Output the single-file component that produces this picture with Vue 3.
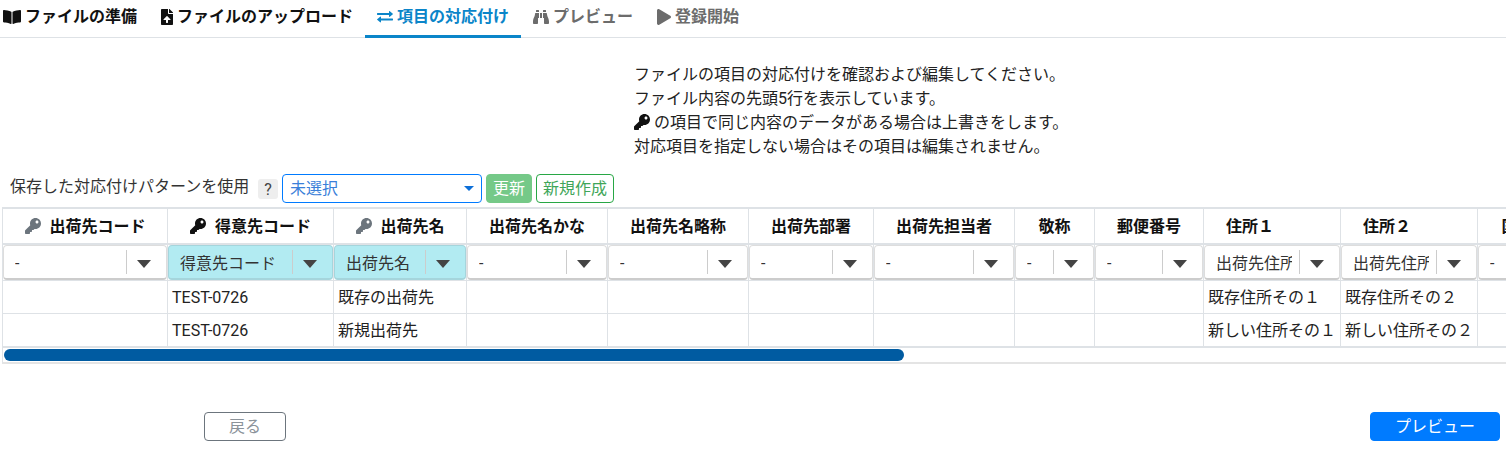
<script setup>
const keyPath = "M512 176.001C512 273.203 433.202 352 336 352c-11.22 0-22.19-1.062-32.827-3.069l-24.012 27.014A23.999 23.999 0 0 1 261.223 384H224v40c0 13.255-10.745 24-24 24h-40v40c0 13.255-10.745 24-24 24H24c-13.255 0-24-10.745-24-24v-78.059c0-6.365 2.529-12.47 7.029-16.971l161.802-161.802C163.108 213.814 160 195.271 160 176 160 78.798 238.797.001 335.999 0 433.488-.001 512 78.511 512 176.001zM336 128c0 26.51 21.49 48 48 48s48-21.49 48-48-21.49-48-48-48-48 21.49-48 48z";

const tabs = [
  { label: "ファイルの準備", w: 576, h: 512, cls: "done", path: "M542.22 32.05c-54.8 3.11-163.72 14.43-230.96 55.59-4.64 2.84-7.27 7.89-7.27 13.17v363.87c0 11.55 12.63 18.85 23.28 13.49 69.18-34.82 169.23-44.32 218.7-46.92 16.89-.89 30.02-14.43 30.02-30.66V62.75c.01-17.71-15.35-31.74-33.77-30.7zM264.73 87.64C197.5 46.48 88.58 35.17 33.78 32.05 15.36 31.01 0 45.04 0 62.75V400.6c0 16.24 13.13 29.78 30.02 30.66 49.49 2.6 149.59 12.11 218.77 46.95 10.62 5.35 23.21-1.94 23.21-13.46V100.63c0-5.29-2.62-10.14-7.27-12.99z" },
  { label: "ファイルのアップロード", w: 384, h: 512, cls: "done", path: "M224 136V0H24C10.7 0 0 10.7 0 24v464c0 13.3 10.7 24 24 24h336c13.3 0 24-10.7 24-24V160H248c-13.2 0-24-10.8-24-24zm65.18 216.01H224v80c0 8.84-7.16 16-16 16h-32c-8.84 0-16-7.16-16-16v-80H94.82c-14.28 0-21.41-17.29-11.27-27.36l96.42-95.7c6.65-6.61 17.39-6.61 24.04 0l96.42 95.7c10.15 10.07 3.03 27.36-11.25 27.36zM377 105L279.1 7c-4.5-4.5-10.6-7-17-7H256v128h128v-6.1c0-6.3-2.5-12.4-7-16.9z" },
  { label: "項目の対応付け", w: 512, h: 512, cls: "active", path: "M0 176v-32c0-9 7-16 16-16h368V80c0-14 17-21 27-11l96 80c6 6 6 16 0 22l-96 80c-10 10-27 3-27-11v-48H16c-9 0-16-7-16-16zM496 304H128v-48c0-14-17-21-27-11L5 325c-6 6-6 16 0 22l96 80c10 10 27 3 27-11v-48h368c9 0 16-7 16-16v-32c0-9-7-16-16-16z" },
  { label: "プレビュー", w: 512, h: 512, cls: "todo", path: "M416 48c0-8.84-7.16-16-16-16h-64c-8.84 0-16 7.16-16 16v48h96V48zM63.91 159.99C61.4 253.84 3.46 274.22 0 404v44c0 17.67 14.33 32 32 32h96c17.67 0 32-14.33 32-32V288h32V128H95.84c-17.63 0-31.45 14.37-31.93 31.99zm384.18 0c-.48-17.62-14.3-31.99-31.93-31.99H320v160h32v160c0 17.67 14.33 32 32 32h96c17.67 0 32-14.33 32-32v-44c-3.46-129.78-61.4-150.16-63.91-244.01zM176 32h-64c-8.84 0-16 7.16-16 16v48h96V48c0-8.84-7.16-16-16-16zm48 256h64V128h-64v160z" },
  { label: "登録開始", w: 448, h: 512, cls: "todo", path: "M424.4 214.7L72.4 6.6C43.8-10.3 0 6.1 0 47.9V464c0 37.5 40.7 60.1 72.4 41.3l352-208c31.4-18.5 31.5-64.1 0-82.6z" },
];

const notes = [
  "ファイルの項目の対応付けを確認および編集してください。",
  "ファイル内容の先頭5行を表示しています。",
  null,
  "対応項目を指定しない場合はその項目は編集されません。",
];

const columns = [
  { title: "出荷先コード", width: 165, key: "off", value: "-", rows: ["", ""] },
  { title: "得意先コード", width: 166, key: "on", value: "得意先コード", mapped: true, rows: ["TEST-0726", "TEST-0726"] },
  { title: "出荷先名", width: 133, key: "off", value: "出荷先名", mapped: true, rows: ["既存の出荷先", "新規出荷先"] },
  { title: "出荷先名かな", width: 141, value: "-", rows: ["", ""] },
  { title: "出荷先名略称", width: 141, value: "-", rows: ["", ""] },
  { title: "出荷先部署", width: 125, value: "-", rows: ["", ""] },
  { title: "出荷先担当者", width: 141, value: "-", rows: ["", ""] },
  { title: "敬称", width: 80, value: "-", rows: ["", ""] },
  { title: "郵便番号", width: 109, value: "-", rows: ["", ""] },
  { title: "住所１", width: 137, shifted: true, value: "出荷先住所１", rows: ["既存住所その１", "新しい住所その１"] },
  { title: "住所２", width: 137, shifted: true, value: "出荷先住所２", rows: ["既存住所その２", "新しい住所その２"] },
  { title: "国コード", width: 112, value: "-", rows: ["", ""] },
];
</script>

<template>
  <div class="page">
    <nav class="tabs">
      <a v-for="tab in tabs" :key="tab.label" class="tab" :class="tab.cls">
        <svg class="tab-icon" :viewBox="`0 0 ${tab.w} ${tab.h}`" :style="{ width: (tab.w / tab.h) * 16 + 'px' }">
          <path :d="tab.path" fill="currentColor" />
        </svg>
        <span>{{ tab.label }}</span>
      </a>
    </nav>

    <div class="notes">
      <template v-for="(note, i) in notes" :key="i">
        <p v-if="note">{{ note }}</p>
        <p v-else>
          <svg class="note-key" viewBox="0 0 512 512"><path :d="keyPath" fill="#111" /></svg>
          の項目で同じ内容のデータがある場合は上書きをします。
        </p>
      </template>
    </div>

    <div class="pattern">
      <span class="pattern-label">保存した対応付けパターンを使用</span>
      <span class="help">?</span>
      <div class="pattern-select">
        <span>未選択</span>
        <i class="caret-blue"></i>
      </div>
      <button class="btn-update">更新</button>
      <button class="btn-new">新規作成</button>
    </div>

    <div class="table-wrap">
      <table class="map-table">
        <colgroup>
          <col v-for="col in columns" :key="col.title" :style="{ width: col.width + 'px' }" />
        </colgroup>
        <thead>
          <tr class="head-row">
            <th v-for="col in columns" :key="col.title" :class="{ shifted: col.shifted }">
              <svg v-if="col.key" class="head-key" :class="col.key" viewBox="0 0 512 512">
                <path :d="keyPath" fill="currentColor" />
              </svg>
              {{ col.title }}
            </th>
          </tr>
          <tr class="select-row">
            <td v-for="col in columns" :key="col.title">
              <div class="col-select" :class="{ mapped: col.mapped }">
                <span class="col-value">{{ col.value }}</span>
                <span class="col-arrow"><i></i></span>
              </div>
            </td>
          </tr>
        </thead>
        <tbody>
          <tr v-for="n in 2" :key="n" class="data-row">
            <td v-for="col in columns" :key="col.title">{{ col.rows[n - 1] }}</td>
          </tr>
        </tbody>
      </table>
      <div class="scrollbar"><div class="thumb"></div></div>
    </div>

    <div class="footer">
      <button class="btn-back">戻る</button>
      <button class="btn-preview">プレビュー</button>
    </div>
  </div>
</template>

<style scoped>
.page {
  width: 1506px;
  height: 474px;
  overflow: hidden;
  background: #fff;
  color: #212529;
  font-family: Roboto, "Noto Sans CJK JP", sans-serif;
  font-size: 16px;
}
.tabs {
  display: flex;
  height: 38px;
  margin-left: -9px;
  border-bottom: 1px solid #dee2e6;
  box-sizing: border-box;
}
.tab {
  display: flex;
  align-items: center;
  gap: 4px;
  height: 38px;
  padding: 0 12px 4px;
  box-sizing: border-box;
  font-weight: 700;
  line-height: 24px;
}
.tab-icon {
  height: 16px;
  flex: none;
}
.tab.done {
  color: #111;
}
.tab.active {
  color: #0a85c9;
  border-bottom: 3px solid #0a85c9;
  padding-bottom: 1px;
}
.tab.todo {
  color: #6c6c6c;
}
.notes {
  margin: 25px 0 0 634px;
  line-height: 24px;
  color: #222;
}
.notes p {
  margin: 0;
  white-space: nowrap;
}
.note-key {
  width: 16px;
  height: 16px;
  vertical-align: -2px;
}
.pattern {
  display: flex;
  align-items: center;
  height: 29px;
  margin-top: 15px;
  padding-left: 10px;
}
.pattern-label {
  width: 248px;
  line-height: 24px;
  margin-top: -3px;
  color: #333;
  white-space: nowrap;
}
.help {
  width: 20px;
  height: 20px;
  margin-top: 1px;
  background: #eee;
  border-radius: 3px;
  text-align: center;
  line-height: 21px;
  font-size: 16px;
  color: #444;
}
.pattern-select {
  display: flex;
  align-items: center;
  justify-content: space-between;
  width: 200px;
  height: 29px;
  margin-left: 4px;
  padding: 0 7px;
  box-sizing: border-box;
  border: 1px solid #007bff;
  border-radius: 4px;
  color: #3a7fd9;
  line-height: 24px;
}
.caret-blue {
  width: 0;
  height: 0;
  border-left: 5px solid transparent;
  border-right: 5px solid transparent;
  border-top: 5px solid #0d6fd8;
}
.btn-update,
.btn-new {
  height: 29px;
  margin-left: 4px;
  padding: 0;
  border-radius: 4px;
  font: inherit;
  line-height: 24px;
}
.btn-update {
  width: 46px;
  border: 1px solid #75c988;
  background: #75c988;
  color: #fff;
}
.btn-new {
  width: 78px;
  border: 1px solid #28a745;
  background: #fff;
  color: #3fa659;
}
.table-wrap {
  margin: 4px 0 0 2px;
  width: 1504px;
  overflow: hidden;
}
.map-table {
  table-layout: fixed;
  width: 1587px;
  border-collapse: separate;
  border-spacing: 0;
  border-top: 2px solid #dee2e6;
  border-left: 1px solid #dee2e6;
}
.head-row th {
  height: 33px;
  padding: 1px 0 0;
  border-right: 1px solid #dee2e6;
  border-bottom: 2px solid #dee2e6;
  line-height: 20px;
  font-weight: 700;
  color: #111;
  white-space: nowrap;
  overflow: hidden;
}
.head-row th.shifted {
  padding-right: 44px;
}
.head-key {
  width: 16px;
  height: 16px;
  margin-right: 5px;
  vertical-align: -2px;
}
.head-key.on {
  color: #111;
}
.head-key.off {
  color: #6c757d;
}
.select-row td {
  height: 35px;
  padding: 0;
  border-right: 1px solid #dee2e6;
  border-bottom: 1px solid #dee2e6;
}
.col-select {
  display: flex;
  align-items: center;
  height: 35px;
  box-sizing: border-box;
  padding-left: 11px;
  border: 1px solid #ddd;
  border-bottom: 2px solid #ccc;
  border-radius: 4px;
  background: #fff;
}
.col-select.mapped {
  background: #b2ebf2;
  border-color: #a5d5dc;
}
.col-value {
  flex: 1;
  min-width: 0;
  margin-top: 4px;
  overflow: hidden;
  white-space: nowrap;
  line-height: 24px;
  color: #333;
}
.col-arrow {
  display: flex;
  align-items: center;
  justify-content: center;
  flex: none;
  width: 33px;
  height: 24px;
  margin-right: 6px;
  margin-left: 7px;
  border-left: 1px solid #ccc;
}
.col-arrow i {
  width: 0;
  height: 0;
  border-left: 7px solid transparent;
  border-right: 7px solid transparent;
  border-top: 8px solid #444;
  margin-top: 3px;
}
.data-row td {
  height: 30px;
  padding: 2px 0 0 4px;
  border-right: 1px solid #dee2e6;
  border-bottom: 1px solid #dee2e6;
  line-height: 20px;
  color: #222;
  white-space: nowrap;
  overflow: hidden;
}
.data-row:last-child td {
  border-bottom: 2px solid #dee2e6;
}
.scrollbar {
  height: 16px;
  box-sizing: border-box;
  padding: 1px 0 0 1px;
  border-bottom: 2px solid #e4e4e4;
  border-left: 1px solid #dee2e6;
}
.thumb {
  width: 900px;
  height: 12px;
  border-radius: 6px;
  background: #005ba1;
}
.footer {
  display: flex;
  justify-content: space-between;
  margin-top: 48px;
  padding: 0 6px 0 204px;
}
.footer button {
  height: 29px;
  padding: 0;
  border-radius: 4px;
  font: inherit;
  line-height: 24px;
}
.btn-back {
  width: 82px;
  border: 1px solid #6c757d;
  background: #fff;
  color: #8b939a;
}
.btn-preview {
  width: 130px;
  border: 1px solid #007bff;
  background: #007bff;
  color: #fff;
}
</style>
<style>
body {
  margin: 0;
  overflow: hidden;
}
</style>
